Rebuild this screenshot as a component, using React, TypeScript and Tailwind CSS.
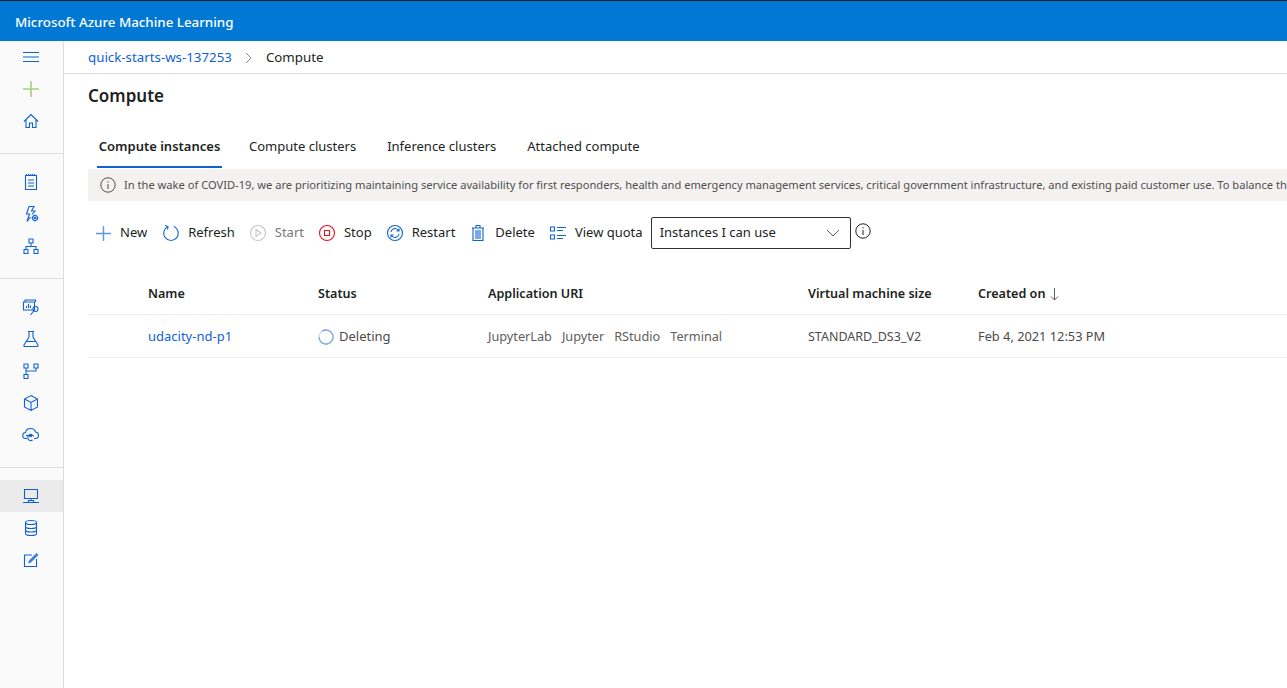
const blue = '#0f62d6';

const Svg = ({ children, size = 18 }: { children: React.ReactNode; size?: number }) => (
  <svg width={size} height={size} viewBox="0 0 18 18" fill="none" stroke="currentColor" strokeWidth="1.1" className="shrink-0">
    {children}
  </svg>
);

const navGroups = [
  [
    <Svg><path d="M1 4.500h16M1 9h16M1 13.500h16" /></Svg>,
    <span className="text-[#a4d27c]"><Svg><path d="M9 1v16M1 9h16" strokeWidth="1.600" /></Svg></span>,
    <Svg><path d="M2 9.500 9 2.500 16 9.500M4 7.500V15.500H7.500V11H10.500V15.500H14V7.500" /></Svg>,
  ],
  [
    <Svg><path d="M3.500 2.500h11v14h-11zM4.500 1v2M6.500 1v2M8.500 1v2M10.500 1v2M12.500 1v2M6 7h6M6 10h6M6 13h6" /></Svg>,
    <Svg><path d="M7 1.500h5L9.500 6H13l-3 3.500M7 1.500 4.500 9h3L5 16.500l3.500-4.500" /><circle cx="13" cy="13" r="2.500" /><circle cx="13" cy="13" r="0.800" /><path d="M13 9.500v1M13 15.500v1M9.500 13h1M15.500 13h1" /></Svg>,
    <Svg><path d="M7 2h4v4H7zM2 12.500h4v4H2zM12 12.500h4v4h-4zM9 6v3.500M4 12.500v-3h10v3" /></Svg>,
  ],
  [
    <Svg><path d="M3 4V2h10.500v2M1.500 4H12.500V12H1.500z" /><path d="M4.500 10V8M6.500 10V6M8.500 10V7.500" /><circle cx="13.500" cy="11" r="2.500" /><path d="M11.700 13 8.500 17" /></Svg>,
    <Svg><path d="M6 1.500h6M7 1.500v5.500L2 15c-.5 1 .2 1.500 1 1.500h12c.8 0 1.500-.5 1-1.500L11 7V1.500M4.500 11.500h9" /></Svg>,
    <Svg><path d="M2 2h4v4H2zM12 2h4v4h-4zM2 12.500h4v4H2zM4 6v6.500M4 9h10V6" /></Svg>,
    <Svg><path d="M9 1.500 15.500 5v8L9 16.500 2.500 13V5zM2.500 5 9 8.500 15.500 5M9 8.500v8" /></Svg>,
    <Svg><path d="M5 12.500H4a3 3 0 0 1-.5-6C4 4 6 2.500 8.500 2.500c2.500 0 4.500 1.500 5 3.500a3.300 3.300 0 0 1 .5 6.500h-2" /><path d="M11.500 10.500a3 3 0 1 0-1 3.500M4 9.500h5" /><circle cx="8.500" cy="9.500" r="1.200" fill="currentColor" /></Svg>,
  ],
  [
    <Svg><path d="M2.500 2.500h13v9h-13zM1 15.500h16M9 11.500v2M6.500 15.500v-2h5v2" /></Svg>,
    <Svg><ellipse cx="9" cy="3.500" rx="5.500" ry="2" /><path d="M3.500 3.500v11c0 1.100 2.500 2 5.500 2s5.500-.9 5.500-2v-11M3.500 7.500c0 1.100 2.500 2 5.500 2s5.500-.9 5.500-2M3.500 11c0 1.100 2.500 2 5.500 2s5.500-.9 5.500-2" /></Svg>,
    <Svg><path d="M14.500 8v7.500H2.500V4H10" /><path d="M6 12.500 7 9.500 14.500 2 16.500 4 9 11.500z" fill="currentColor" stroke="none" opacity="0.8" /></Svg>,
  ],
];

const toolbar = [
  { label: 'New', icon: <span className="text-[#5f97ea]"><Svg size={17}><path d="M9 1v16M1 9h16" strokeWidth="1.500" /></Svg></span> },
  { label: 'Refresh', icon: <span style={{ color: blue }}><Svg><path d="M6 2.500a7.300 7.300 0 1 0 6 0" /><path d="M3 1.500 6 2.500 5.500 5.500" /></Svg></span> },
  { label: 'Start', muted: true, icon: <span className="text-[#c8c6c4]"><Svg><circle cx="9" cy="9" r="7.500" /><path d="M7 5.500 12 9 7 12.500z" /></Svg></span> },
  { label: 'Stop', icon: <span className="text-[#e81123]"><Svg><circle cx="9" cy="9" r="7.500" /><path d="M6.500 6.500h5v5h-5z" /></Svg></span> },
  { label: 'Restart', icon: <span style={{ color: blue }}><Svg><circle cx="9" cy="9" r="7.500" /><path d="M5 8a4 4 0 0 1 7-2l1 1M13 10a4 4 0 0 1-7 2l-1-1M13 4.500V7h-2.500M5 13.500V11h2.500" /></Svg></span> },
  { label: 'Delete', icon: <span style={{ color: blue }}><Svg><path d="M3 4h12M7 4V1.500h4V4M4 4v12.500h10V4" /><path d="M6 6h6v9H6z" fill="currentColor" opacity="0.55" stroke="none" /></Svg></span> },
  { label: 'View quota', icon: <span style={{ color: blue }}><Svg><path d="M1.500 3h4v4h-4zM1.500 11h4v4h-4zM8 3.500h9M8 6.500h6M8 11.500h9M8 14.500h6" /></Svg></span> },
];

const InfoIcon = ({ size = 16 }: { size?: number }) => (
  <svg width={size} height={size} viewBox="0 0 16 16" fill="none" stroke="currentColor" strokeWidth="1" className="shrink-0">
    <circle cx="8" cy="8" r="7.200" />
    <path d="M8 7v5M8 4.200v1.300" />
  </svg>
);

const columnClass = 'grid grid-cols-[60px_170px_170px_320px_170px_1fr] items-center';

export default function App() {
  return (
    <div className="flex h-screen w-screen flex-col overflow-hidden bg-white text-[13px] text-[#201f1e] font-['Noto_Sans',sans-serif]">
      {/* Top bar */}
      <header className="flex h-[41px] shrink-0 items-center border-t border-[#222] bg-[#0078d4] pt-[3px] pl-[15px] text-[13.350px] font-medium text-white">
        Microsoft Azure Machine Learning
      </header>

      <div className="flex min-h-0 flex-1">
        {/* Left nav */}
        <nav className="w-[64px] shrink-0 border-r border-[#dcdcdc] bg-[#fafafa]" style={{ color: blue }}>
          {navGroups.map((group, g) => (
            <div key={g} className={g === 0 ? 'pb-4' : 'border-t border-[#dedede] pt-3 pb-4'}>
              {group.map((icon, i) => (
                <div key={i} className={`flex h-8 items-center justify-center pr-[1px] ${g === 3 && i === 0 ? 'bg-[#ebebeb]' : ''}`}>
                  {icon}
                </div>
              ))}
            </div>
          ))}
        </nav>

        <main className="min-w-0 flex-1 overflow-hidden">
          {/* Breadcrumb */}
          <div className="flex h-[33px] items-center border-b border-[#dcdcdc] pt-[1px] pl-6 text-[13.300px]">
            <span className="text-[#0f62d6]">quick-starts-ws-137253</span>
            <svg width="10" height="12" viewBox="0 0 10 12" fill="none" stroke="#8a8886" className="mr-[12px] ml-[12px]"><path d="M2 1l5 5-5 5" /></svg>
            <span>Compute</span>
          </div>

          <div className="pl-6">
            <h1 className="mt-[10px] h-[24px] text-[17px] leading-[24px] font-semibold">Compute</h1>

            {/* Tabs */}
            <div className="mt-[25px] ml-[9px] flex h-[35px] text-[13px]">
              <div className="w-[125px] border-b-2 border-[#0f62d6] pt-1 text-center font-semibold text-[#201f1e]">Compute instances</div>
              <div className="ml-[27px] pt-1">Compute clusters</div>
              <div className="ml-[31px] pt-1">Inference clusters</div>
              <div className="ml-[31px] pt-1">Attached compute</div>
            </div>

            {/* Notice */}
            <div className="mt-[1px] flex h-[32px] items-center gap-2 overflow-hidden whitespace-nowrap bg-[#f3f2f1] pl-3 text-[11.130px] text-[#514f4d]">
              <InfoIcon />
              <span>In the wake of COVID-19, we are prioritizing maintaining service availability for first responders, health and emergency management services, critical government infrastructure, and existing paid customer use. To balance the demand</span>
            </div>

            {/* Toolbar */}
            <div className="mt-[15px] flex h-[33px] items-center gap-[14px] pl-[7px]">
              {toolbar.map((t) => (
                <div key={t.label} className={`flex items-center gap-[8px] pt-[1px] first:mr-[1px] ${t.muted ? 'text-[#797775]' : ''}`}>
                  {t.icon}
                  <span>{t.label}</span>
                </div>
              ))}
              <div className="-ml-[6px] flex items-center gap-[4px]">
                <div className="flex h-[32px] w-[200px] items-center justify-between rounded-[2px] border border-[#323130] pr-[10px] pl-[8px]">
                  <span>Instances I can use</span>
                  <svg width="14" height="8" viewBox="0 0 14 8" fill="none" stroke="#605e5c"><path d="M1 1l6 6 6-6" /></svg>
                </div>
                <span className="-mt-[3px]"><InfoIcon /></span>
              </div>
            </div>

            {/* Table */}
            <div className={`${columnClass} mt-[23px] h-[43px] border-b border-[#ebebeb] pt-[3px] text-[12.600px] font-semibold`}>
              <span />
              <span>Name</span>
              <span>Status</span>
              <span>Application URI</span>
              <span>Virtual machine size</span>
              <span className="flex items-center gap-[5px]">
                Created on
                <svg width="9" height="13" viewBox="0 0 9 13" fill="none" stroke="#605e5c"><path d="M4.500 0v12M1 8.500l3.500 3.500L8 8.500" /></svg>
              </span>
            </div>
            <div className={`${columnClass} h-[43px] border-b border-[#f0f0f0] pt-[2px] text-[#4c4b4a]`}>
              <span />
              <span className="text-[#0f62d6]">udacity-nd-p1</span>
              <span className="flex items-center gap-[5px]">
                <svg width="16" height="16" viewBox="0 0 16 16" fill="none" strokeWidth="1.300">
                  <circle cx="8" cy="8" r="7" stroke="#c7e0f4" />
                  <path d="M4 2.300a7 7 0 1 1-3 5.700" stroke="#7fa8e6" />
                </svg>
                Deleting
              </span>
              <span className="flex gap-[10px] text-[12.700px] text-[#605e5c]">
                <span>JupyterLab</span>
                <span>Jupyter</span>
                <span>RStudio</span>
                <span>Terminal</span>
              </span>
              <span className="text-[12.500px]">STANDARD_DS3_V2</span>
              <span className="text-[12.800px]">Feb 4, 2021 12:53 PM</span>
            </div>
          </div>
        </main>
      </div>
    </div>
  );
}
